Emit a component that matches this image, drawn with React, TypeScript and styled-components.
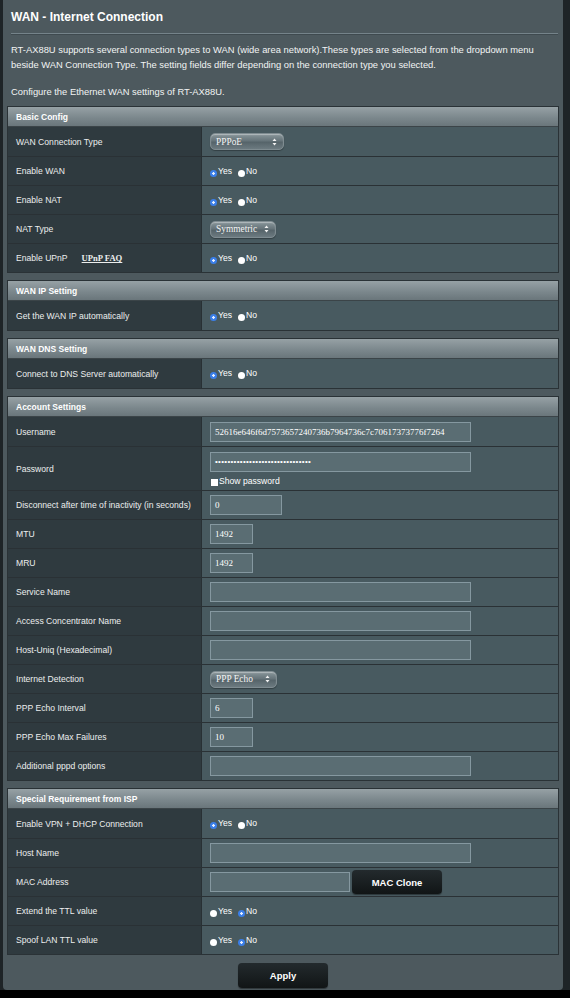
import React from 'react';
import styled, { createGlobalStyle } from 'styled-components';

const GlobalStyle = createGlobalStyle`
  html, body {
    margin: 0;
    padding: 0;
    background: #000;
  }
  body {
    font-family: 'Liberation Sans', Arial, sans-serif;
  }
`;

const Frame = styled.div`
  width: 570px;
  background: #1e2427;
  padding: 0 7px 0 3px;
  box-sizing: border-box;
`;

const Panel = styled.div`
  background: #4d595e;
  border-radius: 0 0 4px 4px;
  padding: 10px 4px 2px 4px;
  color: #fff;
`;

const Title = styled.h1`
  font-size: 12px;
  font-weight: bold;
  line-height: 14px;
  margin: 0 0 0 4px;
`;

const Rule = styled.div`
  height: 1px;
  margin: 9px 1px 0 4px;
  background: #75838a;
  border-bottom: 1px solid #3f4a4f;
`;

const Intro = styled.p`
  font-size: 9.4px;
  line-height: 15px;
  margin: 7px 0 0 4px;
  color: #f2f4f4;
`;

const Tables = styled.div`
  display: flex;
  flex-direction: column;
  gap: 7px;
  margin-top: 7px;
`;

const Table = styled.div`
  border: 1px solid #2a3236;
  background: #2a3236;
`;

const TableHead = styled.div`
  height: 20px;
  display: flex;
  align-items: center;
  padding-left: 8px;
  font-size: 8.5px;
  font-weight: bold;
  background: linear-gradient(#96a1a5, #7c888d 55%, #6a767b);
  border-bottom: 1px solid #3b4448;
  box-sizing: border-box;
`;

const Row = styled.div<{ tall?: boolean }>`
  display: grid;
  grid-template-columns: 194px 1fr;
  height: ${(p) => (p.tall ? 44 : 29)}px;
  box-sizing: border-box;
  border-top: 1px solid #2a3135;
  &:nth-child(2) {
    border-top: none;
  }
`;

const Label = styled.div`
  background: #2f3a3f;
  display: flex;
  align-items: center;
  padding-left: 8px;
  font-size: 8.6px;
  color: #eceeee;
  border-right: 1px solid #283034;
`;

const FaqLink = styled.span`
  font-family: 'Liberation Serif', 'Times New Roman', serif;
  font-weight: bold;
  text-decoration: underline;
  margin-left: 14px;
  font-size: 8.6px;
`;

const Value = styled.div<{ stack?: boolean }>`
  background: #485a60;
  display: flex;
  flex-direction: ${(p) => (p.stack ? 'column' : 'row')};
  justify-content: ${(p) => (p.stack ? 'center' : 'flex-start')};
  align-items: ${(p) => (p.stack ? 'flex-start' : 'center')};
  gap: ${(p) => (p.stack ? 4 : 2)}px;
  padding-left: 8px;
`;

const TextField = styled.div<{ w: number }>`
  width: ${(p) => p.w}px;
  height: 20px;
  box-sizing: border-box;
  background: #5a6d73;
  border: 1px solid #8598a0;
  display: flex;
  align-items: center;
  padding-left: 4px;
  font-family: 'Liberation Serif', 'Times New Roman', serif;
  font-size: 9px;
  color: #fff;
  overflow: hidden;
  white-space: nowrap;
`;

const Dots = styled.span`
  font-family: 'Liberation Sans', Arial, sans-serif;
  font-size: 8px;
  letter-spacing: 0.3px;
`;

const SelectBox = styled.div<{ w: number }>`
  width: ${(p) => p.w}px;
  height: 17px;
  box-sizing: border-box;
  border-radius: 5px;
  border: 1px solid #7f8c91;
  background: linear-gradient(#8a979b, #66747a 45%, #56646a 55%, #6c7a80);
  box-shadow: inset 0 1px 1px rgba(255, 255, 255, 0.35), 0 1px 1px rgba(0, 0, 0, 0.3);
  display: flex;
  align-items: center;
  justify-content: space-between;
  padding: 0 6px 0 5px;
  font-family: 'Liberation Serif', 'Times New Roman', serif;
  font-size: 9.4px;
  color: #f4f4f4;
`;

const Choice = styled.span`
  display: inline-flex;
  align-items: flex-start;
  font-size: 8.6px;
  color: #fff;
  margin-right: 4px;
`;

const Dot = styled.span<{ on?: boolean }>`
  width: 7px;
  height: 7px;
  border-radius: 50%;
  margin-top: 4px;
  margin-right: 1px;
  box-sizing: border-box;
  background: ${(p) =>
    p.on ? 'radial-gradient(circle, #e8f0ff 0 1px, #3a7ee8 1.5px)' : '#fff'};
`;

const CheckLine = styled.span`
  display: inline-flex;
  align-items: flex-end;
  font-size: 8.6px;
  color: #fff;
  margin-left: 1px;
`;

const Box = styled.span`
  width: 7px;
  height: 7px;
  background: #fff;
  margin-right: 1px;
`;

const DarkButton = styled.div<{ w: number; h: number }>`
  width: ${(p) => p.w}px;
  height: ${(p) => p.h}px;
  border-radius: 4px;
  background: linear-gradient(#232a2d, #111516);
  box-shadow: 0 1px 1px rgba(0, 0, 0, 0.4);
  display: flex;
  align-items: center;
  justify-content: center;
  font-size: 9.5px;
  font-weight: bold;
  color: #fff;
`;

const ApplyBar = styled.div`
  display: flex;
  justify-content: center;
  padding: 8px 0 0 0;
`;

const Arrows = () => (
  <svg width="5" height="8" viewBox="0 0 5 8">
    <path d="M2.5 0.5 L4.5 3 L0.5 3 Z M2.5 7.5 L4.5 5 L0.5 5 Z" fill="#f2f2f2" />
  </svg>
);

const Select = ({ w, text }: { w: number; text: string }) => (
  <SelectBox w={w}>
    <span>{text}</span>
    <Arrows />
  </SelectBox>
);

const YesNo = ({ yes = true }: { yes?: boolean }) => (
  <>
    <Choice>
      <Dot on={yes} />
      Yes
    </Choice>
    <Choice>
      <Dot on={!yes} />
      No
    </Choice>
  </>
);

const fieldRows: [string, number, string][] = [
  ['MTU', 43, '1492'],
  ['MRU', 43, '1492'],
  ['Service Name', 261, ''],
  ['Access Concentrator Name', 261, ''],
  ['Host-Uniq (Hexadecimal)', 261, ''],
];

const App = () => {
  return (
    <>
      <GlobalStyle />
      <Frame>
        <Panel>
          <Title>WAN - Internet Connection</Title>
          <Rule />
          <Intro>
            RT-AX88U supports several connection types to WAN (wide area network).These types are
            selected from the dropdown menu beside WAN Connection Type. The setting fields differ
            depending on the connection type you selected.
          </Intro>
          <Intro style={{ marginTop: 12 }}>Configure the Ethernet WAN settings of RT-AX88U.</Intro>

          <Tables>
            <Table>
              <TableHead>Basic Config</TableHead>
              <Row>
                <Label>WAN Connection Type</Label>
                <Value>
                  <Select w={74} text="PPPoE" />
                </Value>
              </Row>
              <Row>
                <Label>Enable WAN</Label>
                <Value>
                  <YesNo />
                </Value>
              </Row>
              <Row>
                <Label>Enable NAT</Label>
                <Value>
                  <YesNo />
                </Value>
              </Row>
              <Row>
                <Label>NAT Type</Label>
                <Value>
                  <Select w={66} text="Symmetric" />
                </Value>
              </Row>
              <Row>
                <Label>
                  Enable UPnP<FaqLink>UPnP FAQ</FaqLink>
                </Label>
                <Value>
                  <YesNo />
                </Value>
              </Row>
            </Table>

            <Table>
              <TableHead>WAN IP Setting</TableHead>
              <Row>
                <Label>Get the WAN IP automatically</Label>
                <Value>
                  <YesNo />
                </Value>
              </Row>
            </Table>

            <Table>
              <TableHead>WAN DNS Setting</TableHead>
              <Row>
                <Label>Connect to DNS Server automatically</Label>
                <Value>
                  <YesNo />
                </Value>
              </Row>
            </Table>

            <Table>
              <TableHead>Account Settings</TableHead>
              <Row>
                <Label>Username</Label>
                <Value>
                  <TextField w={261}>52616e646f6d7573657240736b7964736c7c70617373776f7264</TextField>
                </Value>
              </Row>
              <Row tall>
                <Label>Password</Label>
                <Value stack>
                  <TextField w={261}>
                    <Dots>{'•'.repeat(31)}</Dots>
                  </TextField>
                  <CheckLine>
                    <Box />
                    Show password
                  </CheckLine>
                </Value>
              </Row>
              <Row>
                <Label>Disconnect after time of inactivity (in seconds)</Label>
                <Value>
                  <TextField w={72}>0</TextField>
                </Value>
              </Row>
              {fieldRows.map(([label, w, val]) => (
                <Row key={label}>
                  <Label>{label}</Label>
                  <Value>
                    <TextField w={w}>{val}</TextField>
                  </Value>
                </Row>
              ))}
              <Row>
                <Label>Internet Detection</Label>
                <Value>
                  <Select w={67} text="PPP Echo" />
                </Value>
              </Row>
              <Row>
                <Label>PPP Echo Interval</Label>
                <Value>
                  <TextField w={43}>6</TextField>
                </Value>
              </Row>
              <Row>
                <Label>PPP Echo Max Failures</Label>
                <Value>
                  <TextField w={43}>10</TextField>
                </Value>
              </Row>
              <Row>
                <Label>Additional pppd options</Label>
                <Value>
                  <TextField w={261} />
                </Value>
              </Row>
            </Table>

            <Table>
              <TableHead>Special Requirement from ISP</TableHead>
              <Row>
                <Label>Enable VPN + DHCP Connection</Label>
                <Value>
                  <YesNo />
                </Value>
              </Row>
              <Row>
                <Label>Host Name</Label>
                <Value>
                  <TextField w={261} />
                </Value>
              </Row>
              <Row>
                <Label>MAC Address</Label>
                <Value>
                  <TextField w={140} />
                  <DarkButton w={90} h={24}>MAC Clone</DarkButton>
                </Value>
              </Row>
              <Row>
                <Label>Extend the TTL value</Label>
                <Value>
                  <YesNo yes={false} />
                </Value>
              </Row>
              <Row>
                <Label>Spoof LAN TTL value</Label>
                <Value>
                  <YesNo yes={false} />
                </Value>
              </Row>
            </Table>
          </Tables>

          <ApplyBar>
            <DarkButton w={90} h={25}>Apply</DarkButton>
          </ApplyBar>
        </Panel>
      </Frame>
    </>
  );
};

export default App;
